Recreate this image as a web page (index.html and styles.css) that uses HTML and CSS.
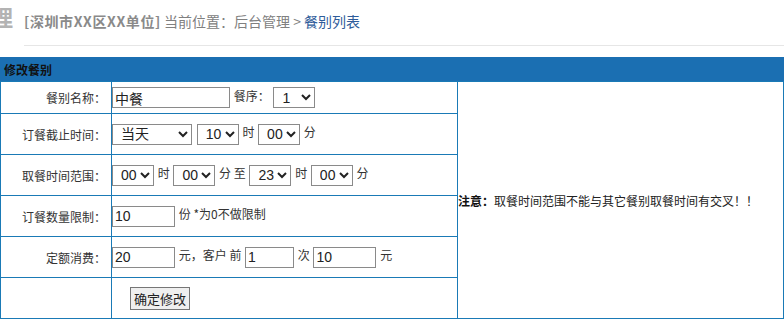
FILE: index.html
```html
<!DOCTYPE html>
<html lang="zh">
<head>
<meta charset="utf-8">
<title>修改餐别</title>
<link rel="stylesheet" href="styles.css">
</head>
<body>
<div class="top">
  <span class="sys">理</span>
  <div class="crumb"><b class="unit">[深圳市XX区XX单位]</b> 当前位置：后台管理 &gt; <a class="cur" href="#">餐别列表</a></div>
</div>
<div class="bar">修改餐别</div>
<table class="form">
  <colgroup><col class="c1"><col class="c2"><col></colgroup>
  <tr class="r1">
    <td class="lbl">餐别名称：</td>
    <td class="fld"><input class="in-name" type="text" value="中餐"> 餐序： <select class="s-sm"><option>1</option></select></td>
    <td class="note" rowspan="6"><b>注意：</b>取餐时间范围不能与其它餐别取餐时间有交叉！！</td>
  </tr>
  <tr>
    <td class="lbl">订餐截止时间：</td>
    <td class="fld"><select class="s-day"><option>当天</option></select> <select class="s-sm"><option>10</option></select> 时 <select class="s-sm"><option>00</option></select> 分</td>
  </tr>
  <tr>
    <td class="lbl">取餐时间范围：</td>
    <td class="fld"><select class="s-sm"><option>00</option></select> 时 <select class="s-sm"><option>00</option></select> 分 至 <select class="s-sm"><option>23</option></select> 时 <select class="s-sm"><option>00</option></select> 分</td>
  </tr>
  <tr>
    <td class="lbl">订餐数量限制：</td>
    <td class="fld"><input class="in-num" type="text" value="10"> 份 *为0不做限制</td>
  </tr>
  <tr>
    <td class="lbl">定额消费：</td>
    <td class="fld"><input class="in-num" type="text" value="20"> 元，客户 前 <input class="in-cnt" type="text" value="1"> 次 <input class="in-num" type="text" value="10"> 元</td>
  </tr>
  <tr>
    <td class="lbl"></td>
    <td class="fld btn-cell"><button class="btn" type="button">确定修改</button></td>
  </tr>
</table>
</body>
</html>
```
FILE: styles.css
```css
html, body {
  margin: 0;
  padding: 0;
  background: #fff;
}
body {
  font-family: "Noto Sans CJK SC", "Noto Sans", sans-serif;
  font-size: 12px;
  color: #333;
  overflow: hidden;
}
.top {
  display: flex;
  align-items: flex-start;
}
.sys {
  flex: none;
  width: 33px;
  margin-left: -9px;
  font-size: 22px;
  font-weight: bold;
  line-height: 32px;
  color: #b3b3b3;
  white-space: nowrap;
}
.crumb {
  flex: 1;
  height: 46px;
  box-sizing: border-box;
  border-bottom: 1px solid #e6e6e6;
  line-height: 42px;
  font-size: 14px;
  color: #808080;
  white-space: nowrap;
}
.crumb .unit {
  color: #8a8a8a;
  letter-spacing: 0.6px;
}
.crumb .cur {
  color: #2e5c9a;
  text-decoration: none;
}
.bar {
  margin-top: 11px;
  height: 24px;
  line-height: 25px;
  padding-left: 4px;
  background: #1b6fb2;
  color: #111;
  font-weight: bold;
  font-size: 12px;
}
.form {
  width: 100%;
  border-collapse: collapse;
  table-layout: fixed;
}
.form td {
  border: 1px solid #1a7ab6;
  padding: 0;
}
.form col.c1 { width: 111px; }
.form col.c2 { width: 346px; }
.form tr { height: 41px; }
.form tr.r1 { height: 32px; }
.lbl {
  text-align: right;
  padding-right: 5px !important;
  white-space: nowrap;
}
.fld {
  white-space: nowrap;
}
.note {
  vertical-align: middle;
  white-space: nowrap;
  color: #222;
}
.note b { color: #111; }
input, select, button {
  font-family: Arial, "Liberation Sans", "Noto Sans CJK SC", sans-serif;
  font-size: 14px;
  color: #222;
  vertical-align: middle;
  box-sizing: border-box;
  margin: 0 1px;
}
.fld > :first-child { margin-left: 0; }
input {
  height: 21px;
  border: 1px solid #8a8a8a;
  padding: 0 2px;
  background: #fff;
}
select {
  height: 21px;
  border: 1px solid #8a8a8a;
  background: #fff;
  padding: 0 0 0 4px;
  border-radius: 0;
}
.in-name { width: 118px; }
.in-num { width: 63px; }
.in-cnt { width: 49px; }
.s-sm { width: 42px; }
.s-day { width: 80px; }
.btn-cell { padding-left: 18px !important; }
.btn {
  height: 23px;
  padding: 0 3px;
  border: 1px solid #767676;
  background: #efefef;
  font-size: 13px;
}
```
